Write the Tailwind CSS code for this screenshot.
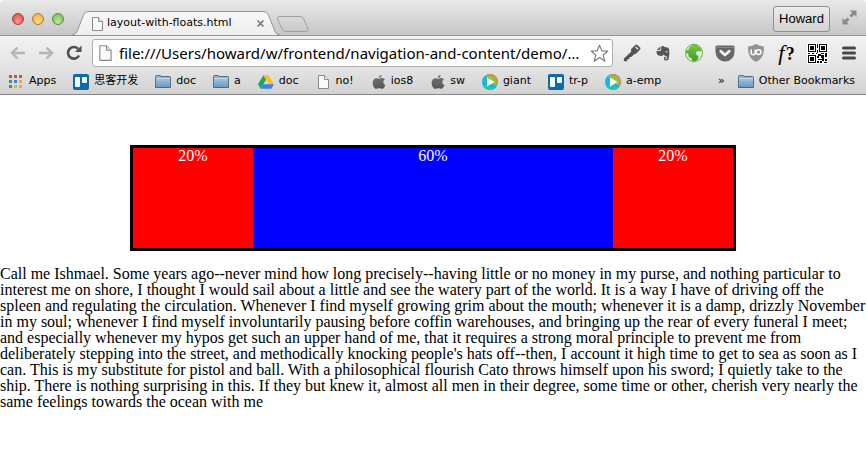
<!DOCTYPE html>
<html lang="en">
<head>
<meta charset="utf-8">
<title>layout-with-floats.html</title>
<script src="https://cdn.jsdelivr.net/npm/@tailwindcss/browser@4"></script>
</head>
<body class="bg-white">
<svg class="absolute size-0" aria-hidden="true">
  <defs>
    <linearGradient id="gFolder" x1="0" y1="0" x2="0" y2="1"><stop offset="0" stop-color="#a3c3dc"/><stop offset="1" stop-color="#6d9ac0"/></linearGradient>
    <linearGradient id="gTab" x1="0" y1="0" x2="0" y2="1"><stop offset="0" stop-color="#f7f7f7"/><stop offset="1" stop-color="#efefef"/></linearGradient>
    <linearGradient id="gNew" x1="0" y1="0" x2="0" y2="1"><stop offset="0" stop-color="#d9d9d9"/><stop offset="1" stop-color="#c9c9c9"/></linearGradient>
    <linearGradient id="gGlobe" x1="0" y1="0" x2="0" y2="1"><stop offset="0" stop-color="#7ccb45"/><stop offset="1" stop-color="#3d9a26"/></linearGradient>
    <linearGradient id="gApple" x1="0" y1="0" x2="0" y2="1"><stop offset="0" stop-color="#777"/><stop offset="1" stop-color="#555"/></linearGradient>
    <symbol id="folder" viewBox="0 0 16 16"><path d="M.5 2.500q0-1 1-1H5q1 0 1 1h8.500q1 0 1 1V13.500H.5z" fill="#8fb4d2" stroke="#54718a"/><path d="M1 4.500h14V13H1z" fill="url(#gFolder)"/><path d="M1 4.500h14" stroke="#c2d8e8"/><path d="M.5 13.500h15" stroke="#4d6a84"/></symbol>
    <symbol id="page" viewBox="0 0 16 16"><path d="M2.500 1.500h6l4 4v9h-10z" fill="#fafafa" stroke="#8a8a8a"/><path d="M8.500 1.500v4h4" fill="#eee" stroke="#8a8a8a"/></symbol>
    <symbol id="trello" viewBox="0 0 16 16"><rect width="16" height="16" rx="2" fill="#0b6bab"/><rect x="2" y="3" width="5" height="10" rx="1" fill="#fff"/><rect x="9" y="3" width="5" height="6" rx="1" fill="#fff"/></symbol>
    <symbol id="apple" viewBox="0 0 16 16"><path transform="translate(-1 -1) scale(1.1)" d="M10.600 1.500c.1 1.500-1 2.900-2.500 3C8 3 9.200 1.700 10.600 1.500zM8.200 5.300c.7 0 1.600-.8 2.900-.7 1.100 0 2 .6 2.500 1.300-2.200 1.300-1.800 4.300.5 5.100-.6 1.600-1.600 3.400-2.900 3.400-1 0-1.500-.6-2.700-.6s-1.700.6-2.600.6C4.200 14.500 2.400 11.600 2.400 9c0-2.700 1.700-4.300 3.400-4.300 1.100 0 1.800.6 2.400.6z" fill="url(#gApple)"/></symbol>
    <symbol id="play" viewBox="0 0 16 16"><circle cx="8" cy="8" r="8" fill="#19b4ea"/><path d="M3.500 1.500Q8-1.500 12.700 1.500 17 5 15.700 10L13 10 6 3z" fill="#f0862c"/><path d="M3 3Q8 .5 12 3.500q3.500 3 2.500 8.500l-2.500-1L5 4z" fill="#8cc63f"/><path d="M1.200 12.200Q4 16 8 16q4.500-.2 6.700-3.600Q9 15 4 10z" fill="#1fc7ae"/><path d="M5 3.600v9l7.500-4.500z" fill="#fff"/></symbol>
    <symbol id="drive" viewBox="0 0 16 16"><path d="M5.400 1.200h5.200L16 10.300h-5.200z" fill="#fbc116"/><path d="M5.400 1.200 8 5.700 2.700 14.800 0 10.300z" fill="#1fa463"/><path d="M5.400 10.300H16l-2.600 4.500H2.700z" fill="#3f7fee"/></symbol>
    <symbol id="apps" viewBox="0 0 16 16"><path d="M0 1h3v3H0zM5 1h3v3H5zM10 1h3v3h-3z" fill="#dc4a3d"/><path d="M0 6h3v3H0zM0 11h3v3H0z" fill="#3a9a5b"/><path d="M5 6h3v3H5z" fill="#3f7fe0"/><path d="M10 6h3v3h-3zM5 11h3v3H5zM10 11h3v3h-3z" fill="#eab02f"/></symbol>
  </defs>
</svg>

<header class="font-['DejaVu_Sans','Noto_Sans_CJK_SC',sans-serif] text-[11px] text-black">
  <div class="flex h-[35px] items-end rounded-t-[4px] bg-linear-to-b from-[#e9e9e9] to-[#c6c6c6] pr-[5px]">
    <div class="flex gap-2 self-center pt-[3px] pl-3">
      <button aria-label="Close window" class="size-3 rounded-full border border-[#a5403b] bg-radial-[at_50%_80%] from-[#ff9a94] to-[#d8443e]"></button>
      <button aria-label="Minimise window" class="size-3 rounded-full border border-[#b07a2b] bg-radial-[at_50%_80%] from-[#ffe08c] to-[#e9a33a]"></button>
      <button aria-label="Zoom window" class="size-3 rounded-full border border-[#5f8c3f] bg-radial-[at_50%_80%] from-[#c4ec9c] to-[#72b34c]"></button>
    </div>
    <div class="relative ml-2 flex h-6 w-[210px] items-center">
      <svg class="absolute inset-0" width="210" height="24" viewBox="0 0 210 24" aria-hidden="true"><path d="M0 24Q3.500 24 5 20.500L11.500 4Q13 .5 16 .5H192Q195 .5 196.500 4L203 20.500Q204.500 24 208 24" fill="url(#gTab)" stroke="#949494"/></svg>
      <a href="#" class="relative flex flex-1 items-center gap-px pt-px pl-[18px]"><svg class="size-4" aria-hidden="true"><use href="#page"/></svg>layout-with-floats.html</a>
      <button aria-label="Close tab" class="relative mr-[17px]"><svg width="9" height="9" viewBox="0 0 9 9"><path d="M1.500 1.500l6 6M7.500 1.500l-6 6" stroke="#777" stroke-width="1.600"/></svg></button>
    </div>
    <button aria-label="New tab" class="mb-[3px] -ml-[6px]"><svg width="34" height="16" viewBox="0 0 34 16"><path d="M3 .5H24Q26.500.5 27.500 2.500L32 13Q33 15.500 30.500 15.500H10Q7 15.500 6 13L1.500 3Q.5.5 3 .5z" fill="url(#gNew)" stroke="#a0a0a0"/></svg></button>
    <button class="mr-2 mb-[3px] ml-auto h-[26px] w-[57px] rounded-[3px] border border-[#8f8f8f] bg-linear-to-b from-[#ececec] to-[#d2d2d2] font-['Liberation_Sans',sans-serif] text-[13px]">Howard</button>
    <button aria-label="Full screen" class="mb-[10px] px-[4px]"><svg width="15" height="15" viewBox="0 0 15 15" fill="#8b8b8b"><path d="M8 .5h6.500V7l-2.200-2.200L9.500 7.500 7.500 5.500l2.700-2.800z"/><path d="M7 14.500H.5V8l2.200 2.200L5.500 7.500l2 2-2.700 2.800z"/></svg></button>
  </div>

  <div class="flex h-[35px] items-center border-t border-[#949494] bg-linear-to-b from-[#f2f2f2] to-[#e2e2e2] pr-[2px]">
    <nav class="flex w-[92px] items-center gap-3 pl-[10px]" aria-label="History">
      <button aria-label="Back"><svg width="16" height="14" viewBox="0 0 16 14"><path d="M7.500 1.500 2 7l5.500 5.500M2 7h13" fill="none" stroke="#b5b5b5" stroke-width="2.400"/></svg></button>
      <button aria-label="Forward"><svg width="16" height="14" viewBox="0 0 16 14"><path d="M8.500 1.500 14 7l-5.500 5.500M14 7H1" fill="none" stroke="#b5b5b5" stroke-width="2.400"/></svg></button>
      <button aria-label="Reload"><svg width="16" height="16" viewBox="0 0 16 16"><path d="M13 10.500A5.800 5.800 0 1 1 12 3.800" fill="none" stroke="#505050" stroke-width="2.600"/><path d="M15.500.5V7H9z" fill="#505050"/></svg></button>
    </nav>
    <form class="mr-[3px] flex h-7 flex-1 items-center gap-1 rounded-[3px] border border-[#adadad] bg-white pr-[3px] pl-1">
      <svg class="size-[18px] shrink-0" aria-hidden="true"><use href="#page" width="18" height="18"/></svg>
      <input aria-label="Address" class="min-w-0 flex-1 bg-transparent font-['Noto_Sans',sans-serif] text-[15px] outline-none" value="file:///Users/howard/w/frontend/navigation-and-content/demo/…">
      <button type="button" aria-label="Bookmark this page" class="shrink-0"><svg width="19" height="19" viewBox="0 0 19 19"><path d="M9.500 1.200 11.900 7h6l-4.800 3.900 1.800 6.300-5.400-3.700-5.400 3.700 1.800-6.300L1.100 7h6z" fill="#fff" stroke="#777" stroke-width="1.100" stroke-linejoin="round"/></svg></button>
    </form>
    <button aria-label="Passwords" class="flex w-[31px] justify-center"><svg width="18" height="18" viewBox="0 0 18 18"><path d="M9.200 6.800.9 14.500v2.700h3.200l.3-2 2-.3.300-1.900 2-.2 3.100-3.200z" fill="#555"/><path d="M8.200 5 12.400.9q1-.7 2 .1l2.700 2.600q.8 1 0 2L13 9.800q-1 .7-2 0L8.200 7q-.8-1 0-2z" fill="#555"/><path d="M12.700 3l2.300 2.200" stroke="#eee" stroke-width="1.500"/></svg></button>
    <button aria-label="Evernote" class="flex w-[31px] justify-center"><svg width="16" height="17" viewBox="0 0 16 17"><path d="M5.300 1.500v2.800q0 .7-.7.700H1.800z" fill="#555"/><path d="M6.200 1.400q2-.8 3.300.6l3 .6q1.400.4 1.600 2 .6 4.400-.2 8.700-.4 2.300-2.600 2.300-2.400 0-2.400-2.200 0-1.900 2.300-1.900v1.400q-1 0-1 .6 0 .7 1 .7 1-.2 1-1.800 0-1.600-1.600-1.600-1.600.1-1.900-1.200-.8 1.600-2.600 1.400-3.200-.1-4-1.700Q1.200 7.500 1.500 6h3.200q1.500 0 1.500-1.500z" fill="#555"/><path d="M10.400 7q.2-1.200 1.300-1.100.9.200.9 1.500-1-.5-2.200-.4z" fill="#eee"/></svg></button>
    <button aria-label="Globe" class="flex w-[31px] justify-center"><svg width="20" height="20" viewBox="0 0 20 20"><circle cx="10" cy="10.500" r="9" fill="#999" opacity=".5"/><circle cx="10" cy="9.800" r="8.800" fill="#e4f3dc"/><path d="M7 1.700Q10.500.2 13.500 1.800L14 3.500l2 .7 2 3-1.500 1.300-2.500-.5-2 1 .5 3 2 .8-.5 3.200-2.500 2.300-3-.3-.8-2.500-3-1.500-.5-3-2.500-1.200.5-2.300 2.500-1 .5-2.500 2-.8z" fill="url(#gGlobe)"/><circle cx="10" cy="9.800" r="8.500" fill="none" stroke="#62b33c" stroke-width=".9"/></svg></button>
    <button aria-label="Pocket" class="flex w-[31px] justify-center"><svg width="20" height="18" viewBox="0 0 20 18"><path d="M2 1.500h16q1.500 0 1.500 1.500v5A9.500 9.500 0 0 1 .5 8V3Q.5 1.500 2 1.500z" fill="#676767"/><path d="M.5 3.500h19" stroke="#888"/><path d="M5.800 7.200 10 11l4.200-3.800" fill="none" stroke="#f3f3f3" stroke-width="2.800" stroke-linecap="round" stroke-linejoin="round"/></svg></button>
    <button aria-label="Content blocker" class="flex w-[31px] justify-center"><svg width="18" height="20" viewBox="0 0 18 20"><path d="M9 1q3.500 2.300 7.800 2.500Q18 14.500 9 19 0 14.500 1.200 3.500 5.500 3.300 9 1z" fill="#929292"/><path d="M4.200 6.500v3.200q0 2 2 2t2-2V6.500" fill="none" stroke="#fff" stroke-width="1.500"/><circle cx="11.600" cy="9.100" r="2.400" fill="none" stroke="#fff" stroke-width="1.500"/></svg></button>
    <button aria-label="Font finder" class="w-[31px] font-['Liberation_Serif',serif] text-[22px] leading-5"><i>f</i> <b class="-ml-1 text-lg leading-5">?</b></button>
    <button aria-label="QR code" class="flex w-[31px] justify-center"><svg width="21" height="21" viewBox="-1 -1 21 21" shape-rendering="crispEdges"><path d="M-1-1h21v21H-1z" fill="#fff"/><path d="M0 0h8v8H0zM11 0h8v8h-8zM0 11h8v8H0z"/><path d="M1 1h6v6H1zM12 1h6v6h-6zM1 12h6v6H1z" fill="#fff"/><path d="M2 2h4v4H2zM13 2h4v4h-4zM2 13h4v4H2zM9 0h1v4H9zM9 6h1v3H9zM0 9h2v1H0zM4 9h2v1H4zM8 9h1v1H8zM13 9h3v1h-3zM10 10h3v2h-3zM17 9h2v4h-2zM9 12h2v2H9zM13 11h3v3h-3zM10 15h4v1h-4zM9 17h2v2H9zM14 14h2v3h-2zM12 17h2v2h-2zM17 15h2v2h-2zM16 18h3v1h-3z"/></svg></button>
    <button aria-label="Menu" class="flex w-[31px] justify-center"><svg width="14" height="14" viewBox="0 0 14 14"><path d="M1.500 2h11M1.500 7h11M1.500 12h11" stroke="#484848" stroke-width="3" stroke-linecap="round"/></svg></button>
  </div>

  <nav aria-label="Bookmarks" class="flex h-[25px] items-center gap-[17px] border-b border-[#858585] bg-linear-to-b from-[#e2e2e2] to-[#d2d2d2] pr-[11px] pb-px pl-[9px] whitespace-nowrap">
    <a href="#" class="flex items-center gap-1"><svg class="size-4" aria-hidden="true"><use href="#apps"/></svg>Apps</a>
    <a href="#" class="flex items-center gap-[5px]"><svg class="size-4" aria-hidden="true"><use href="#trello"/></svg>思客开发</a>
    <a href="#" class="flex items-center gap-[5px]"><svg class="size-4" aria-hidden="true"><use href="#folder"/></svg>doc</a>
    <a href="#" class="flex items-center gap-[5px]"><svg class="size-4" aria-hidden="true"><use href="#folder"/></svg>a</a>
    <a href="#" class="flex items-center gap-[5px]"><svg class="size-4" aria-hidden="true"><use href="#drive"/></svg>doc</a>
    <a href="#" class="flex items-center gap-1"><svg class="size-4" aria-hidden="true"><use href="#page"/></svg>no!</a>
    <a href="#" class="flex items-center gap-1"><svg class="size-4" aria-hidden="true"><use href="#apple"/></svg>ios8</a>
    <a href="#" class="flex items-center gap-1"><svg class="size-4" aria-hidden="true"><use href="#apple"/></svg>sw</a>
    <a href="#" class="flex items-center gap-[5px]"><svg class="size-4" aria-hidden="true"><use href="#play"/></svg>giant</a>
    <a href="#" class="flex items-center gap-[5px]"><svg class="size-4" aria-hidden="true"><use href="#trello"/></svg>tr-p</a>
    <a href="#" class="flex items-center gap-[5px]"><svg class="size-4" aria-hidden="true"><use href="#play"/></svg>a-emp</a>
    <button aria-label="More bookmarks" class="mr-[-4px] ml-auto">»</button>
    <a href="#" class="flex items-center gap-[5px]"><svg class="size-4" aria-hidden="true"><use href="#folder"/></svg>Other Bookmarks</a>
  </nav>
</header>

<main class="pt-[50px] font-['Liberation_Serif',serif] text-base leading-4 text-black">
  <section class="mx-auto flex h-[106px] max-w-[606px] border-3 border-black text-center text-white">
    <div class="w-1/5 bg-[#ff0000]">20%</div>
    <div class="w-3/5 bg-[#0000ff]">60%</div>
    <div class="w-1/5 bg-[#ff0000]">20%</div>
  </section>
  <p class="mt-[15px]">Call me Ishmael. Some years ago--never mind how long precisely--having little or no money in my purse, and nothing particular to interest me on shore, I thought I would sail about a little and see the watery part of the world. It is a way I have of driving off the spleen and regulating the circulation. Whenever I find myself growing grim about the mouth; whenever it is a damp, drizzly November in my soul; whenever I find myself involuntarily pausing before coffin warehouses, and bringing up the rear of every funeral I meet; and especially whenever my hypos get such an upper hand of me, that it requires a strong moral principle to prevent me from deliberately stepping into the street, and methodically knocking people's hats off--then, I account it high time to get to sea as soon as I can. This is my substitute for pistol and ball. With a philosophical flourish Cato throws himself upon his sword; I quietly take to the ship. There is nothing surprising in this. If they but knew it, almost all men in their degree, some time or other, cherish very nearly the same feelings towards the ocean with me</p>
</main>
</body>
</html>
